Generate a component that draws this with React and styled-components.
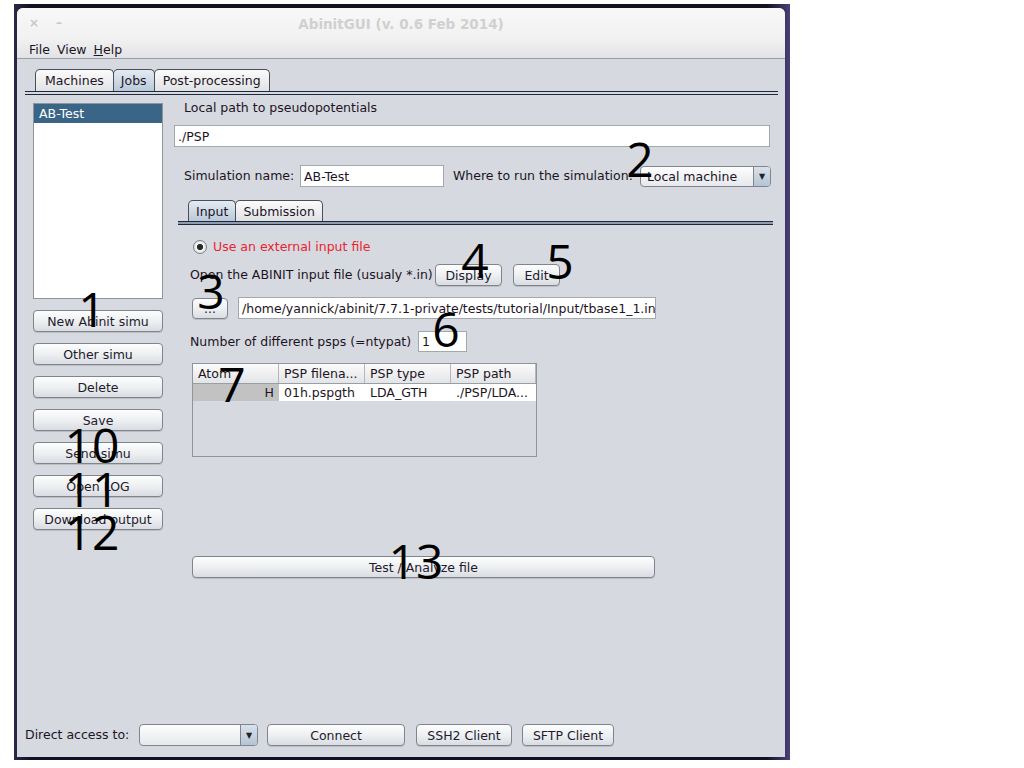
import styled, { createGlobalStyle } from 'styled-components';

const GlobalStyle = createGlobalStyle`
  html, body { margin: 0; padding: 0; background: #ffffff; }
  body { font-family: "DejaVu Sans", "Liberation Sans", sans-serif; font-size: 12.5px; color: #1c1424; }
  * { box-sizing: border-box; }
`;

const Desktop = styled.div`
  margin: 4px 0 0 14px;
  width: 776px;
  height: 756px;
  padding: 4px 5px 3px 3px;
  background: linear-gradient(90deg, #2e2846 0%, #141222 2%, #141222 97%, #4a4078 100%);
`;

const Window = styled.div`
  position: relative;
  height: 100%;
  display: flex;
  flex-direction: column;
  background: #d6d9df;
  border-radius: 6px 6px 0 0;
  overflow: hidden;
`;

const TitleBar = styled.div`
  position: relative;
  height: 32px;
  display: flex;
  align-items: center;
  justify-content: center;
  background: linear-gradient(#f8f8f8, #f1f1f1);
  color: #d0d0d0;
  font-weight: bold;
  font-size: 13.5px;
`;

const WinControls = styled.div`
  position: absolute;
  left: 12px;
  top: 8px;
  display: flex;
  gap: 17px;
  color: #c8c8c8;
  font-size: 12px;
  font-weight: bold;
`;

const MenuBar = styled.div`
  height: 19px;
  display: flex;
  align-items: center;
  gap: 7px;
  padding-left: 12px;
  background: linear-gradient(#f0f0f0, #e2e3e6);
  border-bottom: 1px solid #9a9ea6;
`;

const Underline = styled.span`
  text-decoration: underline;
`;

const TabStrip = styled.div`
  display: flex;
  margin: ${p => p.$margin};
  height: ${p => p.$h || 22}px;
  align-items: flex-end;
`;

const Tab = styled.div`
  height: 100%;
  padding: 0 ${p => p.$pad || 8}px;
  display: flex;
  align-items: center;
  border: 1px solid #4a4e56;
  border-bottom: none;
  border-radius: 5px 5px 0 0;
  background: ${p => p.$active
    ? 'linear-gradient(#e4ebf2, #b9c9d9)'
    : 'linear-gradient(#fbfbfb, #e1e2e5)'};
  & + & { margin-left: -1px; }
`;

const Rule = styled.div`
  height: ${p => p.$h || 4}px;
  margin: ${p => p.$margin};
  border-top: 1px solid #1e2a3c;
  border-bottom: 1px solid #1e2a3c;
  background: ${p => p.$fill || '#c4ccd6'};
`;

const JobsPanel = styled.div`
  flex: 1;
  display: flex;
  gap: 11px;
  padding: 8px 0 0 16px;
`;

const LeftCol = styled.div`
  width: 130px;
  display: flex;
  flex-direction: column;
  gap: 11px;
`;

const List = styled.div`
  height: 196px;
  background: #fff;
  border: 1px solid #8f949b;
`;

const ListItem = styled.div`
  height: 19px;
  padding-left: 5px;
  display: flex;
  align-items: center;
  background: ${p => p.$selected ? '#3a6587' : 'transparent'};
  color: ${p => p.$selected ? '#fff' : 'inherit'};
`;

const Button = styled.button`
  height: ${p => p.$h || 22}px;
  width: ${p => p.$w ? p.$w + 'px' : 'auto'};
  margin-left: ${p => p.$ml || 0}px;
  padding: 0;
  font-family: "DejaVu Sans", "Liberation Sans", sans-serif;
  font-size: 12.5px;
  color: #221a2c;
  border: 1px solid #80858d;
  border-radius: 4px;
  background: linear-gradient(#fdfdfd, #eceef1 55%, #d9dce1);
  box-shadow: 0 1px 0 rgba(0,0,0,0.12);
  flex-shrink: 0;
`;

const RightCol = styled.div`
  width: 599px;
  margin-top: -4px;
  display: flex;
  flex-direction: column;
`;

const Label = styled.div`
  height: 18px;
  line-height: 18px;
  padding-left: ${p => p.$pl || 0}px;
  width: ${p => p.$w ? p.$w + 'px' : 'auto'};
  color: ${p => p.$red ? '#ea2430' : 'inherit'};
  white-space: nowrap;
  flex-shrink: 0;
`;

const Field = styled.div`
  height: ${p => p.$h || 22}px;
  width: ${p => p.$w ? p.$w + 'px' : 'auto'};
  margin: ${p => p.$margin || 0};
  padding-left: 3px;
  display: flex;
  align-items: center;
  background: #fff;
  border: 1px solid #a3a7ae;
  white-space: nowrap;
  overflow: hidden;
  flex-shrink: 0;
`;

const Row = styled.div`
  display: flex;
  align-items: center;
  margin-top: ${p => p.$mt || 0}px;
  padding-left: ${p => p.$pl || 0}px;
`;

const Combo = styled.div`
  height: ${p => p.$h || 21}px;
  width: ${p => p.$w}px;
  margin-left: ${p => p.$ml || 0}px;
  display: flex;
  border: 1px solid #80858d;
  border-radius: 4px;
  background: linear-gradient(#fdfdfd, #e6e8ec);
  overflow: hidden;
  flex-shrink: 0;
`;

const ComboText = styled.div`
  flex: 1;
  padding-left: 6px;
  display: flex;
  align-items: center;
`;

const ComboArrow = styled.div`
  width: 17px;
  border-left: 1px solid #80858d;
  background: linear-gradient(#d9e2ec, #b4c4d4);
  display: flex;
  align-items: center;
  justify-content: center;
  font-size: 8px;
  color: #222;
`;

const InputPanel = styled.div`
  display: flex;
  flex-direction: column;
  padding-left: 16px;
`;

const Radio = styled.span`
  width: 14px;
  height: 14px;
  margin: 0 6px 0 3px;
  border-radius: 50%;
  border: 1px solid #7a7e86;
  background: radial-gradient(circle, #2a2a2a 0 2.8px, #f4f4f6 3.3px, #d4d7dc 100%);
`;

const Table = styled.div`
  width: 345px;
  height: 94px;
  margin: 11px 0 0 2px;
  border: 1px solid #8f949b;
`;

const TRow = styled.div`
  display: flex;
  height: ${p => p.$header ? 20 : 17}px;
  background: ${p => p.$header ? 'linear-gradient(#fbfbfb, #e3e4e7)' : 'transparent'};
  border-bottom: ${p => p.$header ? '1px solid #9a9ea6' : 'none'};
`;

const Cell = styled.div`
  width: ${p => p.$w}px;
  padding: 0 5px;
  display: flex;
  align-items: center;
  justify-content: ${p => p.$right ? 'flex-end' : 'flex-start'};
  border-right: ${p => p.$header ? '1px solid #b4b8be' : 'none'};
  background: ${p => p.$grey ? '#c2c2c2' : p.$header ? 'transparent' : '#fff'};
  white-space: nowrap;
  overflow: hidden;
`;

const BottomBar = styled.div`
  display: flex;
  align-items: center;
  gap: 10px;
  padding: 0 0 11px 8px;
`;

const Num = styled.div`
  position: absolute;
  font-family: "Open Sans", "DejaVu Sans", sans-serif;
  font-size: 48px;
  line-height: 1;
  color: #000;
  transform: translate(-50%, -52%);
  pointer-events: none;
`;

const annotations = [
  ['1', 92, 310], ['2', 640, 160], ['3', 211, 292], ['4', 475, 261],
  ['5', 560, 262], ['6', 446, 330], ['7', 232, 385], ['10', 92, 446],
  ['11', 92, 490], ['12', 92, 533], ['13', 416, 562],
];

const leftButtons = ['New Abinit simu', 'Other simu', 'Delete', 'Save', 'Send simu', 'Open LOG', 'Download output'];

export default function App() {
  return (
    <>
      <GlobalStyle />
      <Desktop>
        <Window>
          <TitleBar>
            <WinControls><span>×</span><span>–</span></WinControls>
            AbinitGUI (v. 0.6 Feb 2014)
          </TitleBar>
          <MenuBar>
            <span>File</span><span>View</span><span><Underline>H</Underline>elp</span>
          </MenuBar>

          <TabStrip $margin="10px 0 0 18px">
            <Tab $pad={9}>Machines</Tab>
            <Tab $active $pad={7}>Jobs</Tab>
            <Tab $pad={8}>Post-processing</Tab>
          </TabStrip>
          <Rule $margin="0 7px 0 8px" $fill="#d6d9df" />

          <JobsPanel>
            <LeftCol>
              <List>
                <ListItem $selected>AB-Test</ListItem>
              </List>
              {leftButtons.map(b => <Button key={b}>{b}</Button>)}
            </LeftCol>

            <RightCol>
              <Label $pl={10}>Local path to pseudopotentials</Label>
              <Field $margin="8px 3px 0 0">./PSP</Field>
              <Row $mt={18} $pl={10}>
                <Label $w={116}>Simulation name:</Label>
                <Field $w={144}>AB-Test</Field>
                <Label $pl={9} $w={196}>Where to run the simulation:</Label>
                <Combo $w={131}>
                  <ComboText>Local machine</ComboText>
                  <ComboArrow>▼</ComboArrow>
                </Combo>
              </Row>

              <TabStrip $margin="13px 0 0 14px" $h={21}>
                <Tab $active $pad={7}>Input</Tab>
                <Tab $pad={7}>Submission</Tab>
              </TabStrip>
              <Rule $margin="0 0 0 4px" $fill="#8e9cae" />

              <InputPanel>
                <Row $mt={13}>
                  <Radio />
                  <Label $red>Use an external input file</Label>
                </Row>
                <Row $mt={8}>
                  <Label $w={245}>Open the ABINIT input file (usualy *.in)</Label>
                  <Button $w={67}>Display</Button>
                  <Button $w={47} $ml={11}>Edit</Button>
                </Row>
                <Row $mt={11}>
                  <Button $w={36} $h={21} $ml={2}>...</Button>
                  <Field $w={418} $margin="0 0 0 10px">/home/yannick/abinit/7.7.1-private/tests/tutorial/Input/tbase1_1.in</Field>
                </Row>
                <Row $mt={12}>
                  <Label $w={228}>Number of different psps (=ntypat)</Label>
                  <Field $w={49} $h={21}>1</Field>
                </Row>
                <Row>
                  <Table>
                    <TRow $header>
                      <Cell $header $w={86}>Atom</Cell>
                      <Cell $header $w={86}>PSP filena...</Cell>
                      <Cell $header $w={86}>PSP type</Cell>
                      <Cell $header $w={85}>PSP path</Cell>
                    </TRow>
                    <TRow>
                      <Cell $w={86} $grey $right>H</Cell>
                      <Cell $w={86}>01h.pspgth</Cell>
                      <Cell $w={86}>LDA_GTH</Cell>
                      <Cell $w={85}>./PSP/LDA...</Cell>
                    </TRow>
                  </Table>
                </Row>
                <Row $mt={99}>
                  <Button $w={463} $ml={2}>Test / Analyze file</Button>
                </Row>
              </InputPanel>
            </RightCol>
          </JobsPanel>

          <BottomBar>
            <Label $w={104}>Direct access to:</Label>
            <Combo $w={119} $h={22}>
              <ComboText />
              <ComboArrow>▼</ComboArrow>
            </Combo>
            <Button $w={138} $ml={-1}>Connect</Button>
            <Button $w={96} $ml={1}>SSH2 Client</Button>
            <Button $w={92}>SFTP Client</Button>
          </BottomBar>

          {annotations.map(([t, x, y]) => (
            <Num key={t} style={{ left: x - 17, top: y - 8 }}>{t}</Num>
          ))}
        </Window>
      </Desktop>
    </>
  );
}
